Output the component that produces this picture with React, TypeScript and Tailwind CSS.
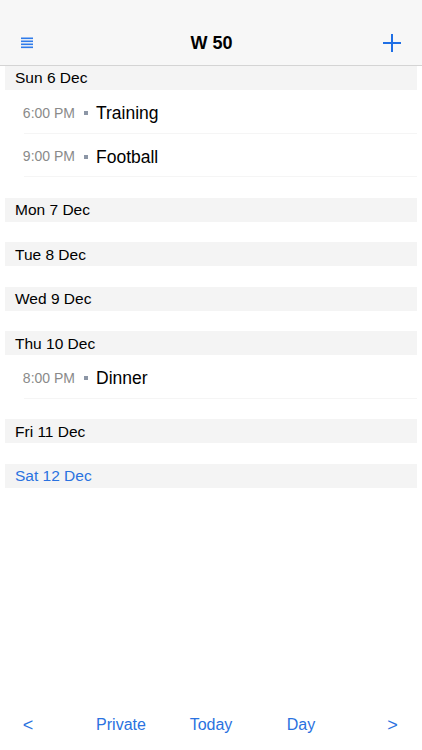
import React from 'react';

interface CalEvent {
  time: string;
  title: string;
}

interface Day {
  label: string;
  today?: boolean;
  events: CalEvent[];
}

const days: Day[] = [
  {
    label: 'Sun 6 Dec',
    events: [
      { time: '6:00 PM', title: 'Training' },
      { time: '9:00 PM', title: 'Football' },
    ],
  },
  { label: 'Mon 7 Dec', events: [] },
  { label: 'Tue 8 Dec', events: [] },
  { label: 'Wed 9 Dec', events: [] },
  { label: 'Thu 10 Dec', events: [{ time: '8:00 PM', title: 'Dinner' }] },
  { label: 'Fri 11 Dec', events: [] },
  { label: 'Sat 12 Dec', today: true, events: [] },
];

function MenuIcon() {
  return (
    <svg width="12" height="12" viewBox="0 0 12 12">
      {[1.5, 4.5, 7.5, 10.5].map((y) => (
        <rect key={y} x="0" y={y - 1} width="12" height="1.6" fill="#2f7bea" />
      ))}
    </svg>
  );
}

function PlusIcon() {
  return (
    <svg width="20" height="20" viewBox="0 0 20 20">
      <path d="M10 1v18M1 10h18" stroke="#1f6fe5" strokeWidth="2" fill="none" />
    </svg>
  );
}

export default function App() {
  return (
    <div
      className="w-[422px] h-[750px] bg-white flex flex-col overflow-hidden"
      style={{ fontFamily: '"Liberation Sans", Arial, sans-serif' }}
    >
      {/* Nav bar */}
      <div className="h-[66px] shrink-0 bg-[#f7f7f7] border-b border-[#d4d4d4] flex items-end pb-[12px] px-[21px]">
        <div className="w-[40px] flex items-center h-[20px]">
          <MenuIcon />
        </div>
        <div className="flex-1 text-center text-[18px] font-bold text-black leading-[20px]">W 50</div>
        <div className="w-[40px] flex justify-end items-center h-[20px] -mr-[1px]">
          <PlusIcon />
        </div>
      </div>

      {/* Week list */}
      <div className="flex-1 px-[5px]">
        {days.map((day) => (
          <div key={day.label} className="mb-[20.5px]">
            <div
              className={`h-[24px] bg-[#f4f4f4] pl-[10px] flex items-center text-[15.5px] ${
                day.today ? 'text-[#2a72e0]' : 'text-black'
              }`}
            >
              {day.label}
            </div>
            {day.events.map((ev) => (
              <div
                key={ev.time}
                className="h-[43.6px] ml-[19px] border-b border-[#f5f5f5] flex items-center pt-[4px]"
              >
                <div className="w-[51px] shrink-0 flex justify-end">
                  <span className="whitespace-nowrap text-[14px] text-[#8a8a8a]">{ev.time}</span>
                </div>
                <span className="w-[4px] h-[4px] shrink-0 bg-[#8c96a6] ml-[9px] mr-[8px]" />
                <span className="text-[17.5px] text-black whitespace-nowrap">{ev.title}</span>
              </div>
            ))}
          </div>
        ))}
      </div>

      {/* Bottom toolbar */}
      <div className="h-[50px] shrink-0 flex items-center text-[16px] text-[#2a72e0]">
        <span className="w-[56px] text-center text-[18px]">&lt;</span>
        <span className="w-[100px] text-center ml-[15px]">Private</span>
        <span className="w-[80px] text-center">Today</span>
        <span className="w-[100px] text-center">Day</span>
        <span className="flex-1 text-center text-[18px] pl-[12px]">&gt;</span>
      </div>
    </div>
  );
}
